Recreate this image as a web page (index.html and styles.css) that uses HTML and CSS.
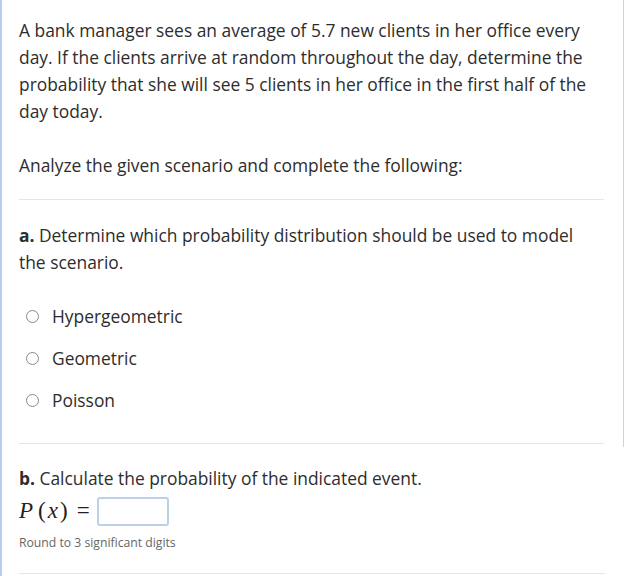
FILE: index.html
```html
<!DOCTYPE html>
<html>
<head>
<meta charset="utf-8">
<link rel="stylesheet" href="styles.css">
</head>
<body>
<div class="page">
  <div class="top">
    <p class="intro">A bank manager sees an average of 5.7 new clients in her office every day. If the clients arrive at random throughout the day, determine the probability that she will see 5 clients in her office in the first half of the day today.</p>
    <p class="instr">Analyze the given scenario and complete the following:</p>
    <hr class="rule">
    <p class="part"><b>a.</b> Determine which probability distribution should be used to model the scenario.</p>
    <ul class="choices">
      <li class="choice"><span class="radio"></span><span>Hypergeometric</span></li>
      <li class="choice"><span class="radio"></span><span>Geometric</span></li>
      <li class="choice"><span class="radio"></span><span>Poisson</span></li>
    </ul>
    <hr class="rule rule-b">
  </div>
  <div class="bottom">
    <p class="part partb"><b>b.</b> Calculate the probability of the indicated event.</p>
    <div class="eq"><span class="math"><span class="mp">P</span><span class="paren">(</span><span class="mx">x</span><span class="paren">)</span><span class="eqs">=</span></span><span class="box"></span></div>
    <p class="hint">Round to 3 significant digits</p>
    <hr class="rule rule-end">
  </div>
</div>
</body>
</html>
```
FILE: styles.css
```css
html, body {
  margin: 0;
  padding: 0;
  background: #fff;
}
body {
  font-family: "Open Sans", "Noto Sans", sans-serif;
  color: #2d2d2d;
  font-size: 17.4px;
  line-height: 27px;
}
.page {
  border-left: 2px solid #b8cdeb;
  min-height: 576px;
  box-sizing: border-box;
}
.top {
  border-right: 1px solid #c9d3e3;
  padding: 17px 19px 3px 17px;
}
.bottom {
  padding: 0 19px 0 17px;
}
p {
  margin: 0;
}
.intro {
  margin-bottom: 27px;
}
.instr {
  margin-bottom: 20px;
}
.rule {
  border: 0;
  border-top: 1px solid #e6e6e6;
  margin: 0;
}
.part {
  margin-top: 22px;
}
.part b {
  font-weight: 700;
}
.choices {
  list-style: none;
  margin: 19px 0 0 0;
  padding: 0;
}
.choice {
  display: flex;
  align-items: center;
  height: 42px;
  padding-left: 7px;
}
.radio {
  width: 11px;
  height: 11px;
  border: 1px solid #8a8a8a;
  border-radius: 50%;
  margin-right: 13px;
  box-sizing: content-box;
}
.rule-b {
  margin-top: 22px;
}
.partb {
  margin-top: 18px;
}
.eq {
  display: flex;
  align-items: center;
  margin-top: 4px;
  height: 30px;
}
.math {
  font-family: "Liberation Serif", "DejaVu Serif", serif;
  font-size: 23px;
  color: #222;
  line-height: 26px;
  display: flex;
  align-items: baseline;
}
.mp {
  font-style: italic;
  margin-right: 5px;
}
.mx {
  font-style: italic;
  margin: 0 2px;
}
.eqs {
  margin: 0 7px 0 9px;
}
.box {
  width: 68px;
  height: 25px;
  border: 2px solid #bcd0ea;
  border-radius: 3px;
}
.hint {
  font-size: 12.2px;
  line-height: 18px;
  color: #666;
  margin-top: 8px;
}
.rule-end {
  margin-top: 21px;
}
```
